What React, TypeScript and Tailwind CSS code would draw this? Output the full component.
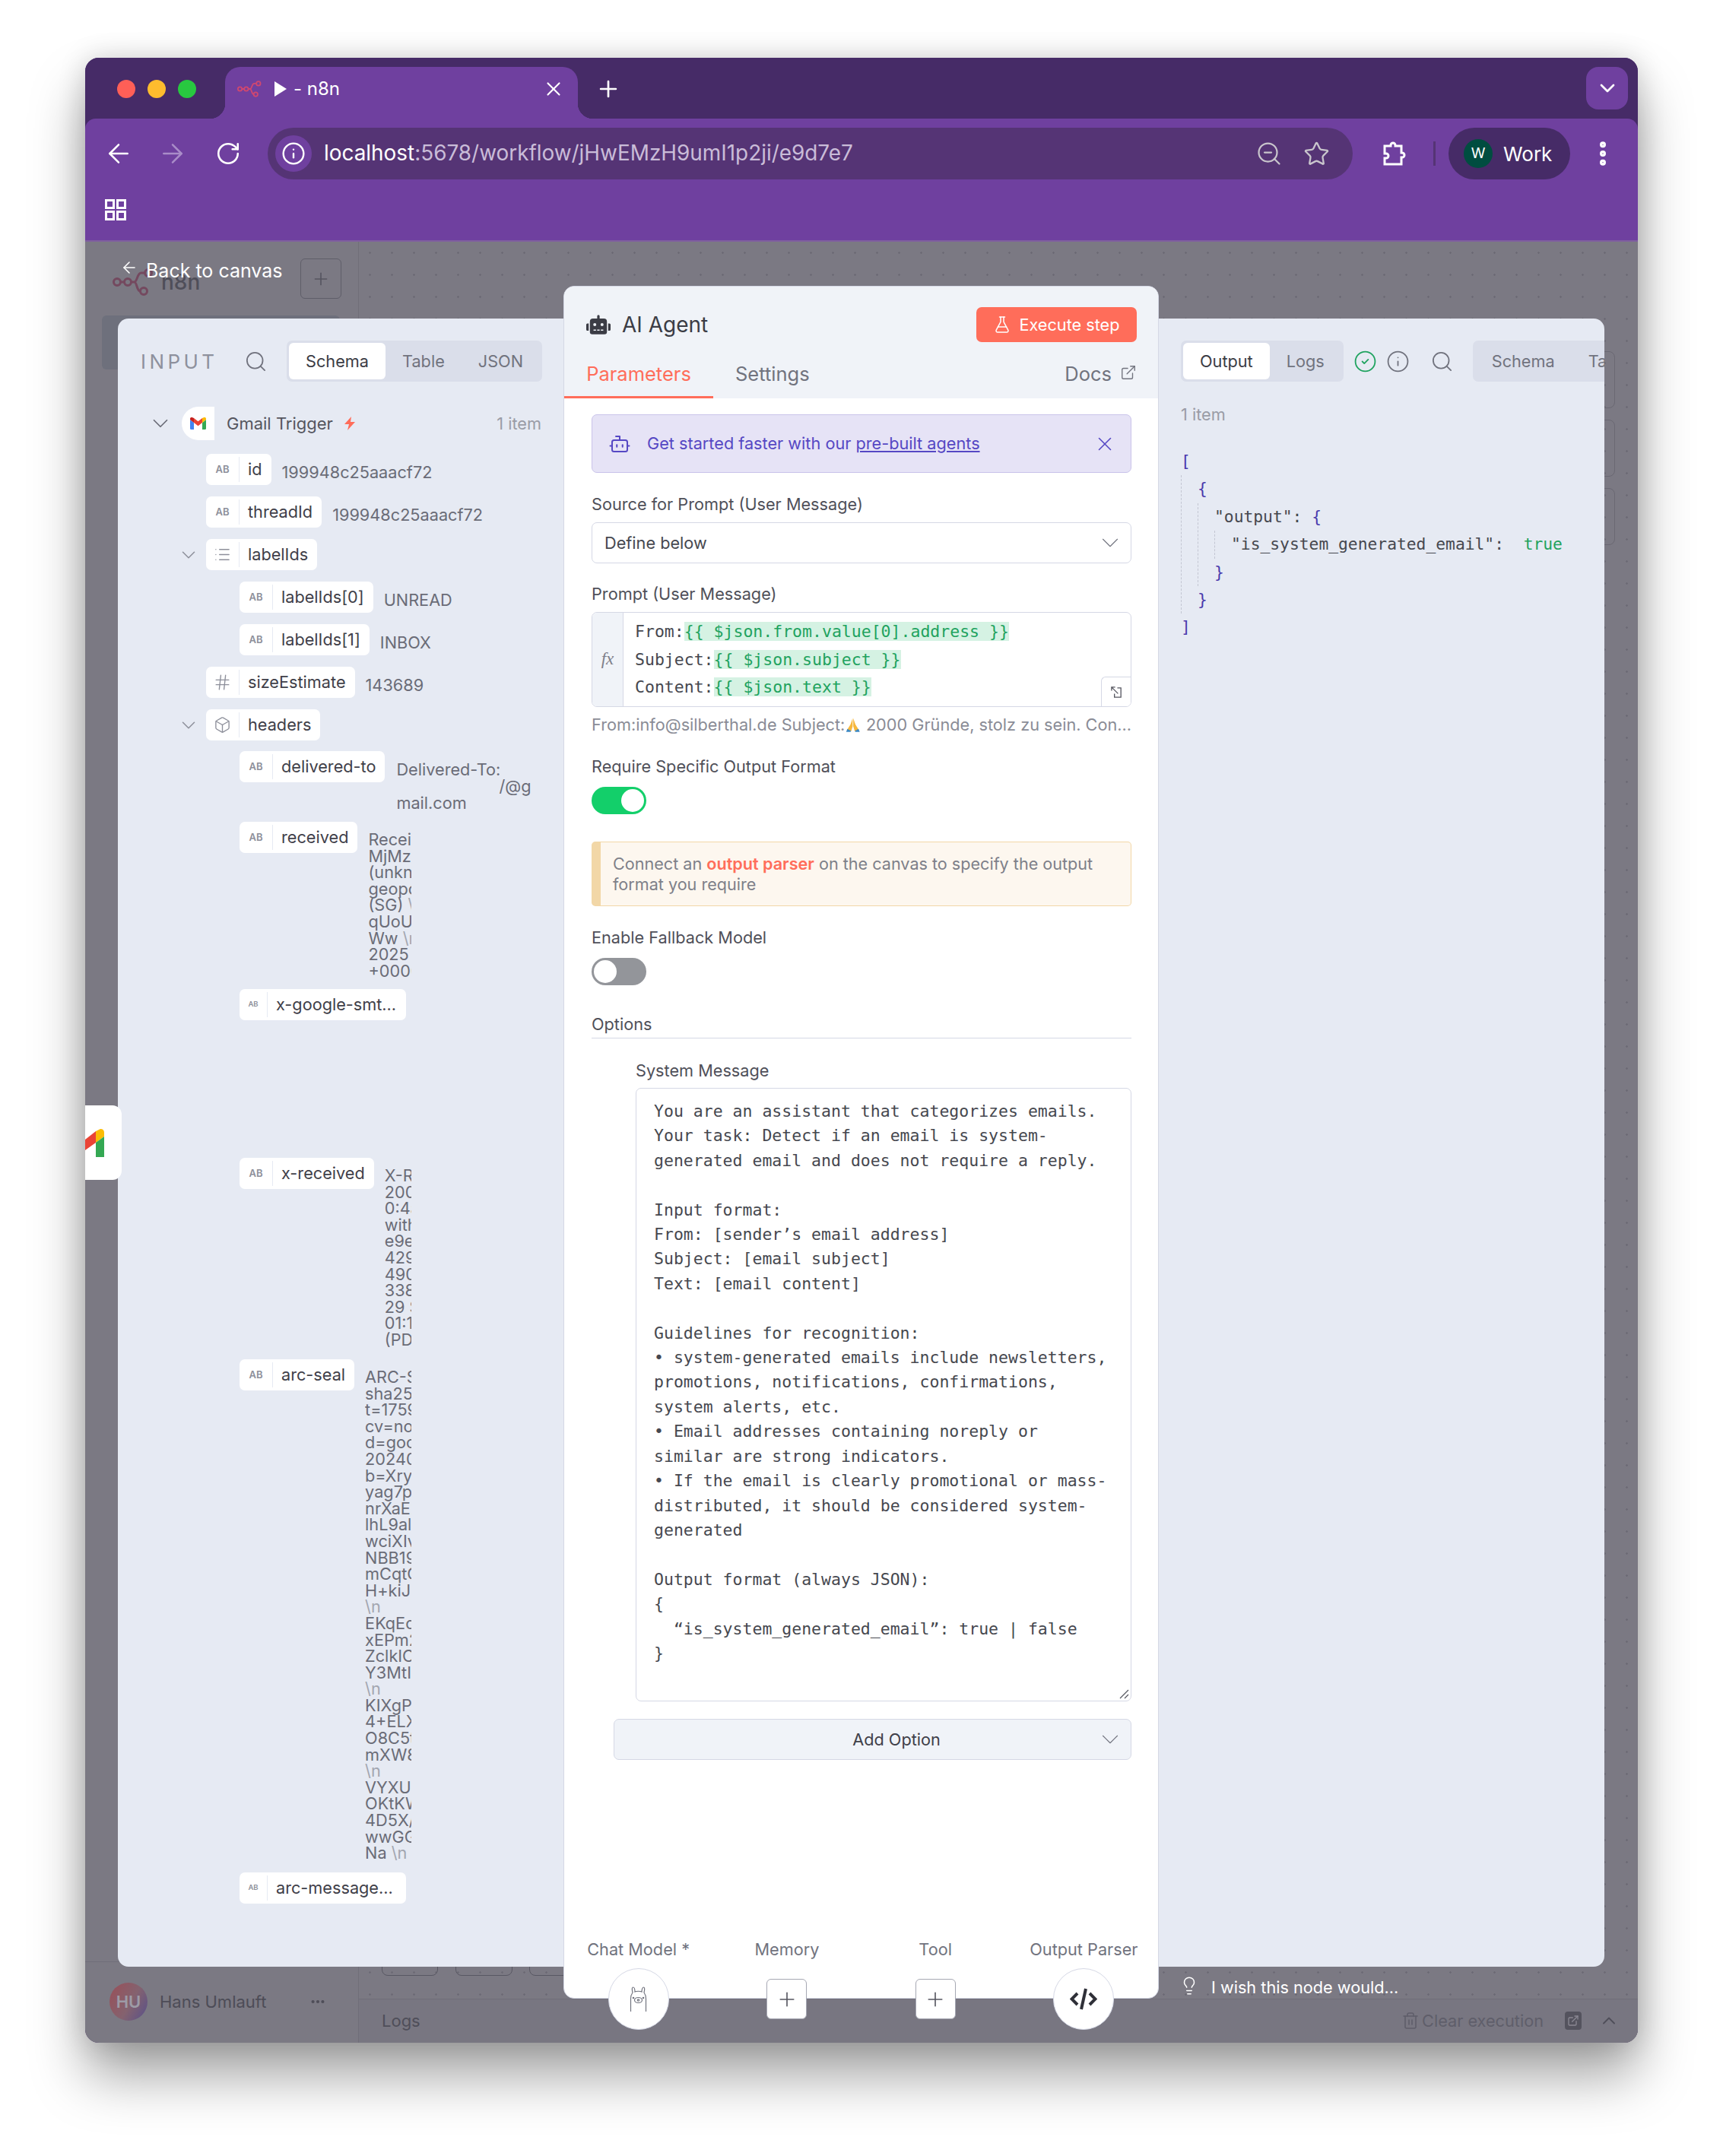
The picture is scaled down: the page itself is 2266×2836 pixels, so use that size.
import type { ReactNode } from "react";
import {
  ArrowLeft,
  ArrowRight,
  Bot,
  Box,
  ChevronDown,
  ChevronUp,
  CircleCheck,
  Ellipsis,
  EllipsisVertical,
  ExternalLink,
  FlaskConical,
  Hash,
  Info,
  Lightbulb,
  List,
  Plus,
  RotateCw,
  Search,
  Star,
  Trash2,
  X,
  ZoomOut,
} from "lucide-react";
import { FaRobot } from "react-icons/fa";

const SYSTEM_MESSAGE = `You are an assistant that categorizes emails.
Your task: Detect if an email is system-
generated email and does not require a reply.

Input format:
From: [sender’s email address]
Subject: [email subject]
Text: [email content]

Guidelines for recognition:
• system-generated emails include newsletters,
promotions, notifications, confirmations,
system alerts, etc.
• Email addresses containing noreply or
similar are strong indicators.
• If the email is clearly promotional or mass-
distributed, it should be considered system-
generated

Output format (always JSON):
{
  “is_system_generated_email”: true | false
}`;

function N8nLogo({ className }: { className: string }) {
  return (
    <svg viewBox="0 0 54 36" fill="none" stroke="currentColor" strokeWidth="3" className={className}>
      <circle cx="6" cy="18" r="4.5" />
      <circle cx="20" cy="18" r="4.5" />
      <circle cx="47" cy="6" r="4.5" />
      <circle cx="41" cy="30" r="4.5" />
      <path d="M10.5 18h5M24.5 18h4c4 0 4-12 9-12h5M28.5 18c4 0 3 12 8 12" />
    </svg>
  );
}

function GmailIcon() {
  return (
    <svg viewBox="0 0 21 16" className="h-4 w-[21px]">
      <path d="M0 3v11.5A1.5 1.5 0 0 0 1.5 16H5V7z" fill="#4285f4" />
      <path d="M16 16h3.5a1.5 1.5 0 0 0 1.5-1.5V3l-5 4z" fill="#34a853" />
      <path d="M16 1v6l5-4V2c0-1.8-2-2.8-3.400-1.700z" fill="#fbbc04" />
      <path d="M5 7V1l5.500 4.200L16 1v6l-5.500 4.200z" fill="#ea4335" />
      <path d="M0 2v1l5 4V1L3.400.3C2-.8 0 .2 0 2z" fill="#c5221f" />
    </svg>
  );
}

function PrayIcon() {
  return (
    <svg viewBox="0 0 24 24" className="mx-[1px] inline-block h-[26px] w-[24px] align-[-5px]">
      <path d="M11.500 2 L8 12 L3 20 L9 23 L11.500 15z" fill="#f6b73c" />
      <path d="M12.500 2 L16 12 L21 20 L15 23 L12.500 15z" fill="#f6b73c" />
      <path d="M3 19 L9 22.500 L8 24 L1 24z" fill="#3b88c3" />
      <path d="M21 19 L15 22.500 L16 24 L23 24z" fill="#3b88c3" />
    </svg>
  );
}

function TabGroup({ tabs, active }: { tabs: string[]; active?: string }) {
  return (
    <div className="flex h-[54px] shrink-0 rounded-[7px] bg-[#dadeea] p-[3px] text-[21.7px]">
      {tabs.map((tab) => (
        <div
          key={tab}
          className={
            tab === active
              ? "flex items-center rounded-[6px] bg-white px-[22px] text-[#3b3c45]"
              : "flex items-center px-[22px] text-[#71737e]"
          }
        >
          {tab}
        </div>
      ))}
    </div>
  );
}

function TypeTag({ type, small }: { type: "ab" | "list" | "num" | "obj"; small?: boolean }) {
  if (type === "list") return <List size={23} strokeWidth={1.4} className="text-[#8d8f9a]" />;
  if (type === "num") return <Hash size={25} strokeWidth={1.3} className="text-[#8d8f9a]" />;
  if (type === "obj") return <Box size={23} strokeWidth={1.4} className="text-[#8d8f9a]" />;
  return (
    <span className={small ? "text-[9.5px] font-semibold text-[#8d8f9a]" : "text-[13px] font-semibold text-[#8d8f9a]"}>
      AB
    </span>
  );
}

type Row = {
  name: string;
  type?: "ab" | "list" | "num" | "obj";
  nested?: boolean;
  expand?: boolean;
  small?: boolean;
  height?: string;
  width?: string;
  value?: string[];
  valueClass?: string;
};

const rows: Row[] = [
  { name: "id", value: ["199948c25aaacf72"] },
  { name: "threadId", value: ["199948c25aaacf72"] },
  { name: "labelIds", type: "list", expand: true },
  { name: "labelIds[0]", nested: true, value: ["UNREAD"] },
  { name: "labelIds[1]", nested: true, value: ["INBOX"] },
  { name: "sizeEstimate", type: "num", value: ["143689"] },
  { name: "headers", type: "obj", expand: true, height: "h-[55px]" },
  { name: "delivered-to", nested: true, height: "h-[93px]" },
  {
    name: "received",
    nested: true,
    height: "h-[220px]",
    valueClass: "w-[57px]",
    value: ["Received:", "MjMzMjM", "(unknown)", "geopolicy", "(SG) \\n", "qUoUkdn", "Ww \\n", "2025 09", "+0000"],
  },
  { name: "x-google-smt...", nested: true, small: true, height: "h-[222px]", width: "w-[219px]" },
  {
    name: "x-received",
    nested: true,
    height: "h-[265px]",
    valueClass: "w-[35px]",
    value: ["X-Received", "2002:a05", "0:4a1b", "with SMTP", "e9e14a5", "429c:1a", "490b:2c", "338d:5f", "29 Sep", "01:15:22", "(PDT)"],
  },
  {
    name: "arc-seal",
    nested: true,
    height: "h-[675px]",
    valueClass: "w-[61px]",
    value: [
      "ARC-Seal: i=1",
      "sha256; a=rsa",
      "t=1759123456",
      "cv=none;",
      "d=google.com",
      "20240605;",
      "b=XryHn8",
      "yag7pQw",
      "nrXaE2kL",
      "lhL9alTz",
      "wciXIvBn",
      "NBB19sKd",
      "mCqtGh5",
      "H+kiJuYr",
      "\\n",
      "EKqEd7f",
      "xEPm2Lo",
      "ZclkICw4",
      "Y3MtIpQa",
      "\\n",
      "KIXgPeR",
      "4+ELXvn",
      "O8C5tUz",
      "mXW8bJs",
      "\\n",
      "VYXUaHc",
      "OKtKWm3",
      "4D5X/gN",
      "wwGGiTe",
      "Na \\n",
    ],
  },
  { name: "arc-message...", nested: true, small: true, height: "h-[41px]", width: "w-[219px]" },
];

function ValueLines({ lines, className }: { lines: string[]; className: string }) {
  return (
    <div
      className={`${lines.length === 1 ? "mt-[14px]" : "mt-[13px]"} overflow-hidden whitespace-pre text-[21.7px] leading-[21.6px] text-[#6a6c77] ${className}`}
    >
      {lines.map((line, i) => {
        const cut = line.indexOf("\\");
        return (
          <div key={i}>
            {cut < 0 ? (
              line
            ) : (
              <>
                {line.slice(0, cut)}
                <span className="text-[#a3a6b0]">{line.slice(cut)}</span>
              </>
            )}
          </div>
        );
      })}
    </div>
  );
}

function SchemaRow({ row }: { row: Row }) {
  return (
    <div className={`flex items-start ${row.nested ? "pl-[124px]" : "pl-[80px]"} ${row.height ?? "h-[56px]"}`}>
      <div className="flex h-[41px] w-[36px] shrink-0 items-center">
        {row.expand && <ChevronDown size={30} strokeWidth={1.2} className="-ml-[2px] text-[#8d8f9a]" />}
      </div>
      <div className={`flex h-[41px] shrink-0 items-center rounded-[7px] bg-white ${row.width ?? ""}`}>
        <div
          className={
            row.small
              ? "flex h-[33px] w-[37px] shrink-0 items-center justify-center border-r border-[#e6eaf3]"
              : "flex h-[33px] w-[44px] shrink-0 items-center justify-center border-r border-[#e6eaf3]"
          }
        >
          <TypeTag type={row.type ?? "ab"} small={row.small} />
        </div>
        <span className="whitespace-nowrap pl-[11px] pr-[12px] text-[21.7px] text-[#3f4049]">{row.name}</span>
      </div>
      {row.name === "delivered-to" ? (
        <div className="ml-[15px] mt-[13px] whitespace-pre text-[21.7px] leading-[22px] text-[#6a6c77]">
          <div>Delivered-To:</div>
          <div className="pl-[135px]">/@g</div>
          <div>mail.com</div>
        </div>
      ) : (
        row.value && (
          <div className="ml-[14px]">
            <ValueLines lines={row.value} className={row.valueClass ?? ""} />
          </div>
        )
      )}
    </div>
  );
}

function InputPanel() {
  return (
    <div className="h-[2168px] w-[586px] shrink-0 overflow-hidden rounded-l-[14px] bg-[#e6eaf3] pt-[29px]">
      <div className="flex items-center pl-[30px] pr-[28px]">
        <span className="w-[136px] text-[26px] tracking-[0.17em] text-[#8e919d]">INPUT</span>
        <Search size={31} strokeWidth={1.4} className="text-[#71737e]" />
        <div className="ml-auto">
          <TabGroup tabs={["Schema", "Table", "JSON"]} active="Schema" />
        </div>
      </div>
      <div className="mt-[33px] flex h-[44px] items-center pl-[39px] pr-[29px]">
        <ChevronDown size={34} strokeWidth={1.2} className="text-[#6a6c77]" />
        <div className="ml-[11px] flex h-[44px] w-[43px] items-center justify-center rounded-l-full rounded-r-[6px] bg-white">
          <GmailIcon />
        </div>
        <span className="ml-[16px] text-[22px] text-[#55565f]">Gmail Trigger</span>
        <svg viewBox="0 0 16 18" className="ml-[14px] h-[18px] w-[16px]">
          <path d="M10 0 L1 10 H7 L5 18 L15 7 H9z" fill="#ff6d5a" />
        </svg>
        <span className="ml-auto text-[21.7px] text-[#9a9ca6]">1 item</span>
      </div>
      <div className="mt-[18px]">
        {rows.map((row) => (
          <SchemaRow key={row.name} row={row} />
        ))}
      </div>
    </div>
  );
}

function Label({ children }: { children: ReactNode }) {
  return <div className="flex h-[30px] items-center text-[21.7px] text-[#4f5059]">{children}</div>;
}

function Toggle({ on }: { on?: boolean }) {
  return (
    <div
      className={
        on
          ? "mt-[12px] flex h-[36px] w-[72px] items-center justify-end rounded-full bg-[#13cf6a] px-[3px]"
          : "mt-[12px] flex h-[36px] w-[72px] items-center justify-start rounded-full bg-[#93959a] px-[3px]"
      }
    >
      <div className="h-[30px] w-[30px] rounded-full bg-white" />
    </div>
  );
}

function Expr({ children }: { children: string }) {
  return <span className="bg-[#d5f2e3] text-[#1fa35f]">{children}</span>;
}

function Connector({ label, children }: { label: string; children: ReactNode }) {
  return (
    <div className="flex w-[196px] flex-col items-center">
      <div className="flex h-[30px] items-center whitespace-nowrap text-[21.7px] text-[#71737e]">{label}</div>
      <div className="mt-[10px] flex h-[81px] items-center justify-center">{children}</div>
    </div>
  );
}

function PlusButton() {
  return (
    <div className="flex h-[53px] w-[53px] items-center justify-center rounded-[6px] border border-[#a6a8b3] bg-white text-[#55565f]">
      <Plus size={30} strokeWidth={1.3} />
    </div>
  );
}

function Modal() {
  return (
    <div className="-mt-[43px] flex h-[2253px] w-[783px] shrink-0 flex-col rounded-[14px] border border-[#d5d8e5] bg-white">
      <div className="h-[147px] shrink-0 rounded-t-[14px] bg-[#f0f3f8]">
        <div className="flex items-center pl-[29px] pr-[28px] pt-[27px]">
          <FaRobot size={32} className="text-[#3b3c45]" />
          <span className="ml-[15px] text-[28px] text-[#3b3c45]">AI Agent</span>
          <div className="ml-auto flex h-[46px] w-[211px] items-center justify-center gap-[10px] rounded-[7px] bg-[#ff6d5a] text-[21.7px] text-white">
            <FlaskConical size={24} strokeWidth={1.5} />
            Execute step
          </div>
        </div>
        <div className="mt-[14px] flex h-[60px] items-stretch text-[25.5px]">
          <div className="flex w-[196px] items-center justify-center border-b-[3px] border-[#ff6d5a] text-[#ff6d5a]">
            Parameters
          </div>
          <div className="flex items-center pb-[3px] pl-[29px] text-[#71737e]">Settings</div>
          <div className="ml-auto flex items-center gap-[11px] pb-[3px] pr-[28px] text-[#71737e]">
            Docs
            <ExternalLink size={22} strokeWidth={1.5} className="-mt-[6px]" />
          </div>
        </div>
      </div>
      <div className="flex min-h-0 flex-1 flex-col pl-[36px] pr-[35px] pt-[21px]">
        <div className="flex h-[77px] shrink-0 items-center rounded-[7px] border border-[#c9c3ea] bg-[#e6e3f6] pl-[21px] pr-[19px] text-[21.7px] text-[#5648c4]">
          <Bot size={30} strokeWidth={1.6} />
          <span className="ml-[21px]">
            Get started faster with our <span className="underline underline-offset-2">pre-built agents</span>
          </span>
          <X size={30} strokeWidth={1.3} className="ml-auto" />
        </div>

        <div className="mt-[26px]">
          <Label>Source for Prompt (User Message)</Label>
        </div>
        <div className="mt-[9px] flex h-[54px] shrink-0 items-center rounded-[7px] border border-[#d5d8e5] pl-[16px] pr-[8px] text-[21.7px] text-[#46484f]">
          Define below
          <ChevronDown size={38} strokeWidth={0.7} className="ml-auto text-[#71737e]" />
        </div>

        <div className="mt-[25px]">
          <Label>Prompt (User Message)</Label>
        </div>
        <div className="relative mt-[9px] flex h-[125px] shrink-0 overflow-hidden rounded-[7px] border border-[#d5d8e5]">
          <div className="flex w-[41px] shrink-0 items-center justify-center border-r border-[#d5d8e5] bg-[#f0f3f8] font-['Liberation_Serif',serif] text-[23px] italic text-[#7e7f8a]">
            fx
          </div>
          <div className="whitespace-pre pl-[15px] pt-[7px] font-['DejaVu_Sans_Mono',monospace] text-[21.5px] leading-[36.5px] text-[#46484f]">
            <div>
              From:<Expr>{"{{ $json.from.value[0].address }}"}</Expr>
            </div>
            <div>
              Subject:<Expr>{"{{ $json.subject }}"}</Expr>
            </div>
            <div>
              Content:<Expr>{"{{ $json.text }}"}</Expr>
            </div>
          </div>
          <div className="absolute bottom-0 right-0 flex h-[39px] w-[39px] items-center justify-center rounded-tl-[6px] border-l border-t border-[#d5d8e5] bg-white">
            <svg viewBox="0 0 18 18" fill="none" stroke="#55565f" strokeWidth="1.4" className="h-[17px] w-[17px]">
              <path d="M2 7V2h5M2 2l9 9M10 3h5v13H6v-5" />
            </svg>
          </div>
        </div>
        <div className="mt-[8px] flex h-[30px] shrink-0 items-center whitespace-pre text-[21.7px] text-[#8a8c96]">
          From:info@silberthal.de Subject:
          <PrayIcon /> 2000 Gründe, stolz zu sein. Con...
        </div>

        <div className="mt-[25px]">
          <Label>Require Specific Output Format</Label>
        </div>
        <Toggle on />

        <div className="mt-[36px] flex h-[85px] shrink-0 items-center rounded-[5px] border border-l-[12px] border-[#f2d7a7] bg-[#fdf7ef] pl-[16px] text-[21.6px] leading-[27px] text-[#7e8089]">
          <div>
            Connect an <span className="font-semibold text-[#ff6d5a]">output parser</span> on the canvas to specify the
            output
            <br />
            format you require
          </div>
        </div>

        <div className="mt-[26px]">
          <Label>Enable Fallback Model</Label>
        </div>
        <Toggle />

        <div className="mt-[36px] border-b border-[#d5d8e5] pb-[3px]">
          <Label>Options</Label>
        </div>

        <div className="mt-[27px] pl-[58px]">
          <Label>System Message</Label>
          <div className="relative mt-[8px] h-[807px] whitespace-pre rounded-[7px] border border-[#d5d8e5] pl-[23px] pt-[14px] font-['DejaVu_Sans_Mono',monospace] text-[21.5px] leading-[32.4px] text-[#46484f]">
            {SYSTEM_MESSAGE}
            <svg viewBox="0 0 14 14" stroke="#55565f" strokeWidth="1.2" className="absolute bottom-[2px] right-[2px] h-[14px] w-[14px]">
              <path d="M2 13L13 2M8 13l5-5" />
            </svg>
          </div>
        </div>

        <div className="ml-[29px] mt-[23px] flex h-[54px] shrink-0 items-center rounded-[7px] border border-[#d5d8e5] bg-[#f0f3f8] pr-[8px] text-[21.7px] text-[#3f4049]">
          <span className="flex-1 pl-[109px] text-center">Add Option</span>
          <ChevronDown size={38} strokeWidth={0.7} className="text-[#71737e]" />
        </div>
      </div>

      <div className="-mb-[42px] flex shrink-0">
        <Connector label="Chat Model *">
          <div className="flex h-[81px] w-[80px] items-center justify-center rounded-full border border-[#d5d8e5] bg-white">
            <svg viewBox="0 0 25 34" fill="none" stroke="#71737e" strokeWidth="1.2" className="h-[34px] w-[25px]">
              <path d="M2.500 33V16C2.500 12 3.500 10 5 8C4 4 4 1 5.500 1C7 1 8 4 8 7C10 6 15 6 17 7C17 4 18 1 19.500 1C21 1 21 4 20 8C21.500 10 22.500 12 22.500 16V33" />
              <ellipse cx="12.500" cy="18" rx="5" ry="3.500" />
              <circle cx="12.500" cy="18" r="1.200" />
              <circle cx="6" cy="15" r=".7" fill="#71737e" />
              <circle cx="19" cy="15" r=".7" fill="#71737e" />
            </svg>
          </div>
        </Connector>
        <Connector label="Memory">
          <PlusButton />
        </Connector>
        <Connector label="Tool">
          <PlusButton />
        </Connector>
        <Connector label="Output Parser">
          <div className="flex h-[81px] w-[80px] items-center justify-center rounded-full border border-[#d5d8e5] bg-white">
            <svg viewBox="0 0 36 29" fill="none" stroke="#2f3038" strokeWidth="4" className="h-[29px] w-[36px]">
              <path d="M10 7L2.500 14.500L10 22M26 7L33.500 14.500L26 22" />
              <path d="M21 1L15 28" />
            </svg>
          </div>
        </Connector>
      </div>
    </div>
  );
}

function OutputPanel() {
  return (
    <div className="w-[586px] shrink-0">
      <div className="h-[2168px] overflow-hidden rounded-r-[14px] bg-[#e6eaf3] pl-[29px] pt-[29px]">
        <div className="flex items-center">
          <TabGroup tabs={["Output", "Logs"]} active="Output" />
          <CircleCheck size={31} strokeWidth={1.4} className="ml-[13px] shrink-0 text-[#1fa35f]" />
          <Info size={31} strokeWidth={1.4} className="ml-[12px] shrink-0 text-[#71737e]" />
          <Search size={31} strokeWidth={1.4} className="ml-[27px] shrink-0 text-[#71737e]" />
          <div className="ml-[25px]">
            <TabGroup tabs={["Schema", "Table", "JSON"]} />
          </div>
        </div>
        <div className="mt-[28px] flex h-[30px] items-center text-[21.7px] text-[#9a9ca6]">1 item</div>
        <div className="mt-[29px] whitespace-pre font-['DejaVu_Sans_Mono',monospace] text-[21.3px] leading-[36.4px] text-[#46484f]">
          <div className="text-[#4a3aad]">[</div>
          <div className="border-l border-dashed border-[#c3c6d2] pl-[21px]">
            <div className="text-[#4a3aad]">{"{"}</div>
            <div className="border-l border-dashed border-[#c3c6d2] pl-[21px]">
              <div>
                "output": <span className="text-[#4a3aad]">{"{"}</span>
              </div>
              <div className="border-l border-dashed border-[#c3c6d2] pl-[21px]">
                "is_system_generated_email":  <span className="text-[#1fa35f]">true</span>
              </div>
              <div className="text-[#4a3aad]">{"}"}</div>
            </div>
            <div className="text-[#4a3aad]">{"}"}</div>
          </div>
          <div className="text-[#4a3aad]">]</div>
        </div>
      </div>
      <div className="mt-[11px] flex items-center pl-[27px] text-[21.7px] text-white">
        <Lightbulb size={26} strokeWidth={1.4} className="-mt-[4px]" />
        <span className="ml-[16px]">I wish this node would...</span>
      </div>
    </div>
  );
}

function ChromeBar() {
  return (
    <>
      <div className="flex h-[80px] shrink-0 items-end bg-[#462b67]">
        <div className="mt-[29px] flex gap-[16px] self-start pl-[42px]">
          <div className="h-[24px] w-[24px] rounded-full bg-[#ff5f57]" />
          <div className="h-[24px] w-[24px] rounded-full bg-[#febc2e]" />
          <div className="h-[24px] w-[24px] rounded-full bg-[#28c840]" />
        </div>
        <div className="relative ml-[38px] flex h-[68px] w-[464px] items-center rounded-t-[20px] bg-[#6f409f] pb-[10px] pl-[16px] pr-[17px] text-white">
          <div className="absolute -left-[20px] bottom-0 h-[20px] w-[20px] bg-[radial-gradient(circle_at_0_0,#462b67_20px,#6f409f_20.5px)]" />
          <div className="absolute -right-[20px] bottom-0 h-[20px] w-[20px] bg-[radial-gradient(circle_at_100%_0,#462b67_20px,#6f409f_20.5px)]" />
          <N8nLogo className="h-[22px] w-[32px] text-[#d0476f]" />
          <svg viewBox="0 0 16 20" className="ml-[17px] h-[20px] w-[16px]">
            <path d="M0 0L16 10L0 20z" fill="white" />
          </svg>
          <span className="ml-[9px] text-[24px]">- n8n</span>
          <X size={30} strokeWidth={1.7} className="ml-auto" />
        </div>
        <Plus size={34} strokeWidth={1.9} className="mb-[22px] ml-[23px] text-white" />
        <div className="ml-auto mr-[13px] mt-[12px] flex h-[56px] w-[55px] items-center justify-center self-start rounded-[16px] bg-[#6f409f] text-white">
          <ChevronDown size={32} strokeWidth={2} />
        </div>
      </div>
      <div className="h-[162px] shrink-0 rounded-t-[14px] border-b-2 border-[#80609f] bg-[#6f409f] bg-clip-padding">
        <div className="flex items-center pt-[12px] text-white">
          <ArrowLeft size={40} strokeWidth={1.5} className="ml-[24px]" />
          <ArrowRight size={40} strokeWidth={1.5} className="ml-[31px] text-[#a98cc8]" />
          <RotateCw size={34} strokeWidth={1.8} className="ml-[36px]" />
          <div className="ml-[35px] flex h-[68px] w-[1427px] items-center rounded-full bg-[#553475] pl-[10px]">
            <div className="flex h-[48px] w-[48px] items-center justify-center rounded-full bg-[#6f409f]">
              <Info size={32} strokeWidth={1.8} />
            </div>
            <span className="ml-[16px] text-[27.9px] text-[#c9bcd8]">
              <span className="text-white">localhost</span>:5678/workflow/jHwEMzH9umI1p2ji/e9d7e7
            </span>
            <ZoomOut size={36} strokeWidth={1.5} className="ml-auto text-[#c8c5cc]" />
            <Star size={35} strokeWidth={1.6} className="ml-[27px] mr-[30px] text-[#c8c5cc]" />
          </div>
          <svg viewBox="0 0 32 32" fill="none" stroke="white" strokeWidth="3" className="ml-[38px] h-[32px] w-[32px]">
            <path d="M4 6h8V5a3 3 0 0 1 6 0v1h8v9h1a3 3 0 0 1 0 6h-1v9H4v-8h2a3 3 0 0 0 0-6H4z" />
          </svg>
          <div className="ml-[36px] h-[32px] w-[3px] bg-[#553475]" />
          <div className="ml-[17px] flex h-[68px] w-[160px] items-center rounded-full bg-[#462b67] pl-[20px]">
            <div className="flex h-[38px] w-[38px] items-center justify-center rounded-full bg-[#004d40] text-[19px]">W</div>
            <span className="ml-[14px] text-[26px]">Work</span>
          </div>
          <EllipsisVertical size={40} strokeWidth={2.8} className="ml-[23px]" />
        </div>
        <div className="pl-[26px] pt-[26px]">
          <svg viewBox="0 0 28 28" fill="none" stroke="white" strokeWidth="3" className="h-[28px] w-[28px]">
            <rect x="1.500" y="1.500" width="10" height="10" />
            <rect x="16.500" y="1.500" width="10" height="10" />
            <rect x="1.500" y="16.500" width="10" height="10" />
            <rect x="16.500" y="16.500" width="10" height="10" />
          </svg>
        </div>
      </div>
    </>
  );
}

function Sidebar() {
  return (
    <div className="flex w-[360px] shrink-0 flex-col border-r border-[#706e79]">
      <div className="mt-[22px] flex h-[53px] items-center pl-[36px] pr-[22px] text-[#4f4e59]">
        <N8nLogo className="mt-[8px] h-[36px] w-[54px] text-[#74495f]" />
        <span className="ml-[10px] mt-[8px] text-[28px] font-medium">n8n</span>
        <div className="ml-auto flex h-[53px] w-[54px] items-center justify-center rounded-[6px] border border-[#5f5e69] text-[#55545f]">
          <Plus size={26} strokeWidth={1.5} />
        </div>
      </div>
      <div className="ml-[22px] mr-[24px] mt-[22px] h-[71px] rounded-[6px] bg-[#6e707c]" />
      <div className="mt-auto h-[107px] border-t border-[#706e79] pl-[32px] pt-[27px]">
        <div className="flex items-center">
          <div className="flex h-[50px] w-[50px] items-center justify-center rounded-full bg-[linear-gradient(120deg,#9a4f58,#84626f_55%,#57508a)] text-[22px] font-semibold text-[#9d9ba6]">
            HU
          </div>
          <span className="ml-[16px] text-[22px] text-[#4d4c57]">Hans Umlauft</span>
          <Ellipsis size={22} strokeWidth={2.5} className="ml-[57px] text-[#4d4c57]" />
        </div>
      </div>
    </div>
  );
}

function CanvasBackdrop() {
  return (
    <div className="flex min-w-0 flex-1 flex-col">
      <div className="relative flex-1 bg-[radial-gradient(circle,#6b6974_1px,transparent_1.5px)] bg-[size:29px_29px]">
        <div className="absolute bottom-[30px] left-[30px] h-[60px] w-[74px] rounded-[8px] border border-[#595863]" />
        <div className="absolute bottom-[30px] left-[127px] h-[60px] w-[75px] rounded-[8px] border border-[#595863]" />
        <div className="absolute bottom-[30px] left-[224px] h-[60px] w-[75px] rounded-[8px] border border-[#595863]" />
        <div className="absolute left-[1500px] top-[144px] h-[75px] w-[152px] rounded-[8px] border border-[#6a6873]" />
        <div className="absolute left-[1500px] top-[234px] h-[75px] w-[152px] rounded-[8px] border border-[#6a6873]" />
        <div className="absolute left-[1500px] top-[324px] h-[75px] w-[152px] rounded-[8px] border border-[#6a6873]" />
      </div>
      <div className="flex h-[58px] shrink-0 items-center border-t border-[#706e79] bg-[#787681] pl-[30px] pr-[24px] text-[#4f4e59]">
        <span className="text-[22px]">Logs</span>
        <div className="ml-auto flex items-center text-[#5f5e6a]">
          <Trash2 size={24} strokeWidth={1.6} />
          <span className="ml-[3px] text-[21.7px]">Clear execution</span>
          <div className="ml-[28px] flex h-[24px] w-[22px] items-center justify-center rounded-[4px] bg-[#54535e] text-[#8a8893]">
            <ExternalLink size={16} strokeWidth={2} />
          </div>
          <ChevronUp size={28} strokeWidth={1.6} className="ml-[22px] text-[#4f4e59]" />
        </div>
      </div>
    </div>
  );
}

export default function App() {
  return (
    <div className="h-[2836px] w-[2266px] bg-white pl-[112px] pt-[76px] font-['Inter',sans-serif] antialiased">
      <div className="flex h-[2611px] w-[2042px] flex-col overflow-hidden rounded-[18px] bg-[#462b67] shadow-[0_44px_70px_rgba(0,0,0,0.36),0_0_36px_rgba(0,0,0,0.16)]">
        <ChromeBar />
        <div className="relative flex min-h-0 flex-1 bg-[#7b7983]">
          <Sidebar />
          <CanvasBackdrop />

          {/* dialog over the dimmed canvas */}
          <div className="absolute left-[43px] top-[101px] flex items-start">
            <InputPanel />
            <Modal />
            <OutputPanel />
          </div>
          <div className="absolute left-[46px] top-[20px] flex items-center text-white">
            <ArrowLeft size={24} strokeWidth={1.6} className="-mt-[10px]" />
            <span className="ml-[10px] text-[25px]">Back to canvas</span>
          </div>
          <div className="absolute left-0 top-[1136px] flex h-[98px] w-[48px] items-center rounded-r-[12px] bg-white">
            <svg viewBox="0 0 48 98" className="h-[98px] w-[48px]">
              <path d="M0 45L14 34V49L0 59z" fill="#ea4335" />
              <path d="M14 34L20 31Q25 31 25 36V41L14 49z" fill="#fbbc04" />
              <path d="M14 49L25 41V68H14z" fill="#34a853" />
            </svg>
          </div>
        </div>
      </div>
    </div>
  );
}
